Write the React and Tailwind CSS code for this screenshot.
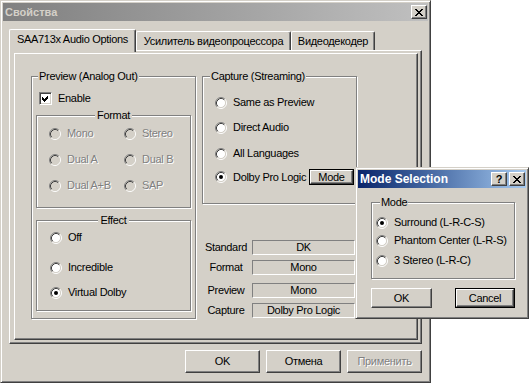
const WIN = 'border border-t-[#d4d0c8] border-l-[#d4d0c8] border-r-[#404040] border-b-[#404040] shadow-[inset_1px_1px_#fff,inset_-1px_-1px_#808080]';
const BTN = 'border border-t-white border-l-white border-r-[#404040] border-b-[#404040] shadow-[inset_-1px_-1px_#808080]';
const ETCH = 'border border-[#808080] shadow-[inset_1px_1px_#fff,1px_1px_#fff]';
const SUNK = 'border border-t-[#808080] border-l-[#808080] border-r-white border-b-white';
const DIS = 'text-[#808080] [text-shadow:1px_1px_0_#fff]';

const X_PIXELS = [
  [0, 0], [1, 0], [6, 0], [7, 0],
  [1, 1], [2, 1], [5, 1], [6, 1],
  [2, 2], [3, 2], [4, 2], [5, 2],
  [3, 3], [4, 3],
  [2, 4], [3, 4], [4, 4], [5, 4],
  [1, 5], [2, 5], [5, 5], [6, 5],
  [0, 6], [1, 6], [6, 6], [7, 6],
];

function CloseGlyph() {
  return (
    <svg width="8" height="7" viewBox="0 0 8 7" shapeRendering="crispEdges">
      {X_PIXELS.map(([x, y]) => <rect key={`${x}-${y}`} x={x} y={y} width="1" height="1" fill="#000" />)}
    </svg>
  );
}

function CaptionButton({ children }) {
  return (
    <div className={`w-[16px] h-[14px] bg-[#d4d0c8] flex items-center justify-center ${BTN}`}>
      {children}
    </div>
  );
}

function Radio({ checked, disabled }) {
  return (
    <svg width="12" height="12" viewBox="0 0 12 12" className="shrink-0">
      <circle cx="6" cy="6" r="4.5" fill={disabled ? '#d4d0c8' : '#fff'} />
      <path d="M2.11 9.89 A5.5 5.5 0 0 1 9.89 2.11" stroke="#808080" fill="none" />
      <path d="M9.89 2.11 A5.5 5.5 0 0 1 2.11 9.89" stroke="#fff" fill="none" />
      <path d="M2.82 9.18 A4.5 4.5 0 0 1 9.18 2.82" stroke="#404040" fill="none" />
      <path d="M9.18 2.82 A4.5 4.5 0 0 1 2.82 9.18" stroke="#d4d0c8" fill="none" />
      {checked && <circle cx="6" cy="6" r="2" fill="#000" />}
    </svg>
  );
}

function Option({ label, checked, disabled, className = '' }) {
  return (
    <div className={`flex items-center gap-[6px] h-[13px] whitespace-nowrap ${className}`}>
      <Radio checked={checked} disabled={disabled} />
      <span className={disabled ? DIS : ''}>{label}</span>
    </div>
  );
}

function Check() {
  return (
    <span className={`w-[13px] h-[13px] bg-white flex items-center justify-center shadow-[inset_1px_1px_#404040,inset_-1px_-1px_#d4d0c8] ${SUNK}`}>
      <svg width="7" height="7" viewBox="0 0 7 7" shapeRendering="crispEdges">
        <path d="M0 2 L2 4 L6 0 L6 3 L2 7 L0 5 Z" fill="#000" />
      </svg>
    </span>
  );
}

function Button({ children, size, isDefault, disabled }) {
  const face = (
    <div className={`w-full h-full bg-[#d4d0c8] flex items-center justify-center ${BTN} ${disabled ? DIS : ''}`}>
      {children}
    </div>
  );
  if (isDefault) {
    return <div className={`border border-black ${size}`}>{face}</div>;
  }
  return <div className={size}>{face}</div>;
}

function Tab({ children, active, size }) {
  return (
    <div
      className={`${size} ${active ? 'relative z-10 h-[23px] mb-[-2px]' : 'h-[19px]'} bg-[#d4d0c8] border-l border-t border-r border-l-white border-t-white border-r-[#404040] shadow-[inset_-1px_0_#808080] rounded-t-[2px] flex justify-center pt-[3px] whitespace-nowrap`}
    >
      {children}
    </div>
  );
}

function Field({ label, value, className = '' }) {
  return (
    <div className={`flex items-center ${className}`}>
      <span className="w-[48px] text-center">{label}</span>
      <div className={`ml-[2px] w-[103px] h-[15px] flex items-center justify-center ${SUNK}`}>{value}</div>
    </div>
  );
}

export default function App() {
  return (
    <div className="relative w-[531px] h-[383px] bg-white overflow-hidden font-['Liberation_Sans',Arial,sans-serif] text-[11px] leading-[13px] tracking-[-0.3px] text-black">
      {/* Main properties window */}
      <div className={`w-[431px] h-[383px] bg-[#d4d0c8] p-[2px] flex flex-col ${WIN}`}>
        <div className="h-[18px] shrink-0 flex items-center justify-between pl-[2px] pr-[1px] bg-linear-to-r from-[#808080] to-[#c0c0c0]">
          <span className="font-bold text-[#d4d0c8] tracking-normal">Свойства</span>
          <CaptionButton><CloseGlyph /></CaptionButton>
        </div>

        {/* Tabs */}
        <div className="h-[29px] shrink-0 flex items-end pl-[6px]">
          <Tab active size="w-[127px]">SAA713x Audio Options</Tab>
          <Tab size="w-[155px]">Усилитель видеопроцессора</Tab>
          <Tab size="w-[84px]">Видеодекодер</Tab>
        </div>

        {/* Tab page */}
        <div className={`ml-[6px] w-[413px] h-[294px] shrink-0 ${BTN}`}>
          <div className={`ml-[4px] mt-[2px] w-[404px] h-[287px] flex items-start ${BTN}`}>
            {/* Left column */}
            <fieldset className={`ml-[16px] mt-[16px] w-[165px] h-[249px] shrink-0 ${ETCH}`}>
              <legend className="ml-[6px] px-[1px] bg-[#d4d0c8]">Preview (Analog Out)</legend>
              <div className="pl-[7px] pt-[9px] flex items-center gap-[6px]">
                <Check />
                <span>Enable</span>
              </div>

              <fieldset className={`ml-[4px] mt-[4px] w-[155px] h-[99px] ${ETCH}`}>
                <legend className="mx-auto px-[2px] bg-[#d4d0c8]">Format</legend>
                <div className="grid grid-cols-[75px_1fr] gap-y-[13px] pl-[12px] pt-[5px]">
                  <Option label="Mono" disabled />
                  <Option label="Stereo" disabled />
                  <Option label="Dual A" disabled />
                  <Option label="Dual B" disabled />
                  <Option label="Dual A+B" disabled />
                  <Option label="SAP" disabled />
                </div>
              </fieldset>

              <fieldset className={`ml-[4px] mt-[6px] w-[155px] h-[97px] ${ETCH}`}>
                <legend className="mx-auto px-[2px] bg-[#d4d0c8]">Effect</legend>
                <div className="pl-[13px] flex flex-col">
                  <Option label="Off" className="mt-[4px]" />
                  <Option label="Incredible" className="mt-[17px]" />
                  <Option label="Virtual Dolby" checked className="mt-[12px]" />
                </div>
              </fieldset>
            </fieldset>

            {/* Right column */}
            <div className="ml-[6px] mt-[16px] flex flex-col">
              <fieldset className={`w-[155px] h-[134px] ${ETCH}`}>
                <legend className="ml-[7px] px-[1px] bg-[#d4d0c8]">Capture (Streaming)</legend>
                <div className="pl-[12px] pt-[13px] flex flex-col">
                  <Option label="Same as Preview" />
                  <Option label="Direct Audio" className="mt-[12px]" />
                  <Option label="All Languages" className="mt-[13px]" />
                  <div className="mt-[9px] flex items-center h-[16px]">
                    <Radio checked />
                    <span className="ml-[6px] w-[76px] whitespace-nowrap">Dolby Pro Logic</span>
                    <Button size="w-[45px] h-[16px]" isDefault>Mode</Button>
                  </div>
                </div>
              </fieldset>

              <Field label="Standard" value="DK" className="mt-[36px]" />
              <Field label="Format" value="Mono" className="mt-[5px]" />
              <Field label="Preview" value="Mono" className="mt-[8px]" />
              <Field label="Capture" value="Dolby Pro Logic" className="mt-[5px]" />
            </div>
          </div>
        </div>

        {/* Dialog buttons */}
        <div className="mt-[6px] flex justify-end gap-[6px] pr-[6px]">
          <Button size="w-[75px] h-[23px]">OK</Button>
          <Button size="w-[75px] h-[23px]">Отмена</Button>
          <Button size="w-[75px] h-[23px]" disabled>Применить</Button>
        </div>
      </div>

      {/* Mode Selection window */}
      <div className={`absolute left-[355px] top-[167px] w-[174px] h-[152px] bg-[#d4d0c8] p-[2px] flex flex-col ${WIN}`}>
        <div className="h-[18px] shrink-0 flex items-center justify-between pl-[2px] pr-[1px] bg-linear-to-r from-[#0a246a] to-[#a6caf0]">
          <span className="font-bold text-white text-[12px] tracking-normal">Mode Selection</span>
          <div className="flex gap-[2px]">
            <CaptionButton><span className="font-bold text-[11px] leading-[10px] tracking-normal">?</span></CaptionButton>
            <CaptionButton><CloseGlyph /></CaptionButton>
          </div>
        </div>

        <fieldset className={`ml-[13px] mt-[8px] w-[144px] h-[83px] ${ETCH}`}>
          <legend className="ml-[8px] px-[1px] bg-[#d4d0c8]">Mode</legend>
          <div className="pl-[4px] flex flex-col">
            <Option label="Surround (L-R-C-S)" checked className="mt-[7px] gap-[5px]" />
            <Option label="Phantom Center (L-R-S)" className="mt-[5px] gap-[5px]" />
            <Option label="3 Stereo (L-R-C)" className="mt-[7px] gap-[5px]" />
          </div>
        </fieldset>

        <div className="ml-[13px] mt-[9px] w-[144px] flex justify-between">
          <Button size="w-[61px] h-[20px]">OK</Button>
          <Button size="w-[60px] h-[20px]" isDefault>Cancel</Button>
        </div>
      </div>
    </div>
  );
}
